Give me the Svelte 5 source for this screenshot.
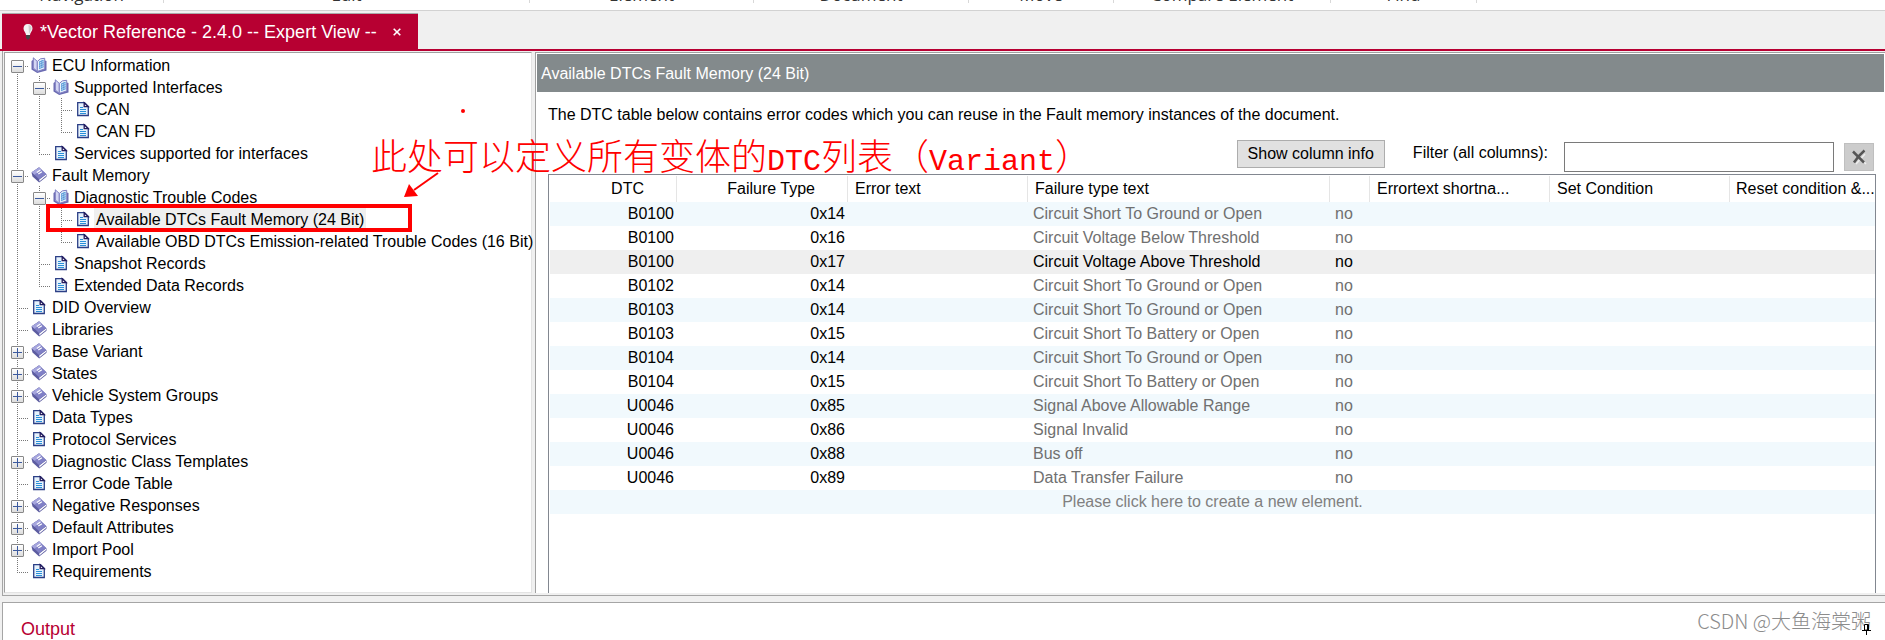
<script>
  let filter = $state('');
  let selected = $state('Available DTCs Fault Memory (24 Bit)');

  const ribbon = [
    { name: 'Navigation', width: 164 },
    { name: 'Edit', width: 366 },
    { name: 'Element', width: 224 },
    { name: 'Document', width: 215 },
    { name: 'Move', width: 145 },
    { name: 'Compare Element', width: 217 },
    { name: 'Find', width: 146 },
  ];

  let tree = $state([
    { name: 'ECU Information', icon: 'open', open: true, children: [
      { name: 'Supported Interfaces', icon: 'open', open: true, children: [
        { name: 'CAN', icon: 'doc' },
        { name: 'CAN FD', icon: 'doc' },
      ] },
      { name: 'Services supported for interfaces', icon: 'doc' },
    ] },
    { name: 'Fault Memory', icon: 'book', open: true, children: [
      { name: 'Diagnostic Trouble Codes', icon: 'open', open: true, children: [
        { name: 'Available DTCs Fault Memory (24 Bit)', icon: 'doc' },
        { name: 'Available OBD DTCs Emission-related Trouble Codes (16 Bit)', icon: 'doc' },
      ] },
      { name: 'Snapshot Records', icon: 'doc' },
      { name: 'Extended Data Records', icon: 'doc' },
    ] },
    { name: 'DID Overview', icon: 'doc' },
    { name: 'Libraries', icon: 'book' },
    { name: 'Base Variant', icon: 'book', children: [] },
    { name: 'States', icon: 'book', children: [] },
    { name: 'Vehicle System Groups', icon: 'book', children: [] },
    { name: 'Data Types', icon: 'doc' },
    { name: 'Protocol Services', icon: 'doc' },
    { name: 'Diagnostic Class Templates', icon: 'book', children: [] },
    { name: 'Error Code Table', icon: 'doc' },
    { name: 'Negative Responses', icon: 'book', children: [] },
    { name: 'Default Attributes', icon: 'book', children: [] },
    { name: 'Import Pool', icon: 'book', children: [] },
    { name: 'Requirements', icon: 'doc' },
  ]);

  const codes = [
    ['B0100', '0x14', 'Circuit Short To Ground or Open'],
    ['B0100', '0x16', 'Circuit Voltage Below Threshold'],
    ['B0100', '0x17', 'Circuit Voltage Above Threshold'],
    ['B0102', '0x14', 'Circuit Short To Ground or Open'],
    ['B0103', '0x14', 'Circuit Short To Ground or Open'],
    ['B0103', '0x15', 'Circuit Short To Battery or Open'],
    ['B0104', '0x14', 'Circuit Short To Ground or Open'],
    ['B0104', '0x15', 'Circuit Short To Battery or Open'],
    ['U0046', '0x85', 'Signal Above Allowable Range'],
    ['U0046', '0x86', 'Signal Invalid'],
    ['U0046', '0x88', 'Bus off'],
    ['U0046', '0x89', 'Data Transfer Failure'],
  ];
  let current = $state.raw(codes[2]);

  let rows = $derived(
    codes.filter((c) => c.join(' ').toLowerCase().includes(filter.toLowerCase()))
  );
</script>

{#snippet icon(kind)}
  {#if kind === 'doc'}
    <svg width="16" height="16" viewBox="0 0 16 16">
      <path d="M2.7 1.7h6.800l3.800 3.800v9H2.700z" fill="#e6f2fc" stroke="#2b3f86" stroke-width="1.3" />
      <path d="M9.2 1.700v4h4.100z" fill="#fff" stroke="#241c5e" stroke-width="1.3" />
      <path d="M5 6.500h3M5 8.500h6M5 10.500h6M5 12.500h6" stroke="#2a8fd8" />
    </svg>
  {:else if kind === 'book'}
    <svg width="16" height="16" viewBox="0 0 16 16">
      <path d="M.5 5.500L8 .3l7.500 7.200v2.200L8.200 15.600 1.500 9.500z" fill="#5c5ca0" />
      <path d="M8.300 12.400L15 7.400v1.600l-6.700 5.400z" fill="#fff" />
      <path d="M.8 5.300L8.200.4l7 6.700-7 5.200z" fill="#8080c6" />
      <path d="M.8 5.300L8.200.4l2.400 2.300-7.300 5z" fill="#a6a6dd" />
      <path d="M5.800 5.400l3.600-2.300M7.300 7l3.600-2.300" stroke="#fff" stroke-width="1.2" />
    </svg>
  {:else}
    <svg width="16" height="16" viewBox="0 0 16 16">
      <path d="M.5 4L2.500 2.500v9L6 14l8-2.500V3.500l1.500.5v9.500L6.200 16 .5 12.500z" fill="#6b6bb2" />
      <path d="M2.300.8L6.300 4.400v10l-4-3.400z" fill="#d4d6f3" stroke="#7c7cc0" />
      <path d="M6.300 4.400Q9 .8 13.700 1.300v10.600l-7.400 2.500z" fill="#e8f3fd" stroke="#7c7cc0" />
      <path d="M8 5.200l4.500-2M8 7.400l4.500-2M8 9.600l4.500-2M8 11.800l4.500-2M8.700 4.500v7M10.300 3.500v7.500M12 3v7.500" stroke="#4a90d4" stroke-width=".8" />
    </svg>
  {/if}
{/snippet}

{#snippet branch(nodes, guides)}
  {#each nodes as node, i}
    {@const last = i === nodes.length - 1}
    {@const first = i === 0 && guides.length === 0}
    <li>
      <div class="node">
        {#each guides as line}
          <span class="cell">
            {#if line}
              <svg class="lines" width="22" height="22"><path d="M11.5 0V22" /></svg>
            {/if}
          </span>
        {/each}
        <span class="cell">
          <svg class="lines" width="22" height="22">
            <path d="M11.5 {first ? 12 : 0}V{last ? 12 : 22}M11 12.5H22" />
          </svg>
          {#if node.children}
            <button
              class="expander"
              aria-label="Toggle {node.name}"
              onclick={() => (node.open = !node.open)}
            >
              <svg width="11" height="11" viewBox="0 0 11 11">
                <path d={node.open ? 'M1 5.5h9' : 'M1 5.5h9M5.5 1v9'} stroke="#3c5a9e" />
              </svg>
            </button>
          {/if}
        </span>
        <span class="cell">{@render icon(node.icon)}</span>
        <button
          class="label"
          class:selected={selected === node.name}
          onclick={() => (selected = node.name)}>{node.name}</button>
      </div>
      {#if node.open && node.children.length}
        <ul>{@render branch(node.children, [...guides, !last])}</ul>
      {/if}
    </li>
  {/each}
{/snippet}

<div class="app">
  <div class="ribbon">
    {#each ribbon as group}
      <div class="group" style="width: {group.width}px"><span>{group.name}</span></div>
    {/each}
  </div>

  <div class="tabs">
    <div class="tab">
      <svg width="10" height="16" viewBox="0 0 10 16">
        <path d="M5 0C2 0 .5 2 .5 4.500S2.800 8.500 3 11h4c.2-2.500 2.500-4 2.500-6.500S8 0 5 0z" fill="#f4f4f4" />
        <path d="M5.500 1C8 1.500 8.800 3 8.500 5L6 10z" fill="#cfcfcf" />
        <path d="M3 11h4v3L5 16 3 14z" fill="#444" />
      </svg>
      <span>*Vector Reference - 2.4.0 -- Expert View --</span>
      <button class="close" aria-label="Close tab">
        <svg width="8" height="8" viewBox="0 0 8 8">
          <path d="M.7.7l6.600 6.600M7.300.7L.7 7.300" stroke="#fff" stroke-width="1.600" />
        </svg>
      </button>
    </div>
  </div>

  <div class="workspace">
    <nav class="tree">
      <ul>{@render branch(tree, [])}</ul>
      <div class="mark"></div>
    </nav>

    <main class="editor">
      <h1>Available DTCs Fault Memory (24 Bit)</h1>
      <p class="hint">The DTC table below contains error codes which you can reuse in the Fault memory instances of the document.</p>

      <div class="tools">
        <button class="info">Show column info</button>
        <label for="filter">Filter (all columns):</label>
        <input id="filter" type="text" bind:value={filter} />
        <button class="clear" aria-label="Clear filter" onclick={() => (filter = '')}>
          <svg width="16" height="16" viewBox="0 0 16 16">
            <path d="M4 4l11 11M14 5l-9 10" stroke="#eee" stroke-width="1.500" />
            <path d="M2 2.500l11 11" stroke="#555" stroke-width="2.500" />
            <path d="M13.500 1.500Q8 6 3 13.500" fill="none" stroke="#555" stroke-width="2.500" />
          </svg>
        </button>
      </div>

      <div class="grid">
        <table>
          <colgroup>
            <col class="c1" /><col class="c2" /><col class="c3" /><col class="c4" />
            <col class="c5" /><col class="c6" /><col class="c6" /><col />
          </colgroup>
          <thead>
            <tr>
              <th class="num">DTC</th>
              <th class="num">Failure Type</th>
              <th>Error text</th>
              <th>Failure type text</th>
              <th></th>
              <th>Errortext shortna...</th>
              <th>Set Condition</th>
              <th>Reset condition &amp;...</th>
            </tr>
          </thead>
          <tbody>
            {#each rows as row}
              <tr class:current={row === current} onclick={() => (current = row)}>
                <td class="num">{row[0]}</td>
                <td class="num">{row[1]}</td>
                <td></td>
                <td class="text">{row[2]}</td>
                <td class="text">no</td>
                <td></td>
                <td></td>
                <td></td>
              </tr>
            {/each}
            <tr><td class="create" colspan="8">Please click here to create a new element.</td></tr>
          </tbody>
        </table>
      </div>
    </main>
  </div>

  <section class="output">
    <h2>Output</h2>
    <div class="watermark">CSDN @大鱼海棠粥</div>
    <svg class="pin" width="9" height="11" viewBox="0 0 9 11">
      <path d="M2.500 6V.5h4V6M5.500 0v6M0 6.500h9M4.500 6v5" fill="none" stroke="#000" />
    </svg>
  </section>

  <!-- red pen notes on top of the window -->
  <div class="note">此处可以定义所有变体的<span>DTC</span>列表（<span>Variant</span>）</div>
  <svg class="arrow" width="36" height="28" viewBox="0 0 36 28">
    <path d="M34 1L10 18" stroke="#f00" stroke-width="2" />
    <path d="M0 25L5 12l9 12z" fill="#f00" />
  </svg>
  <i class="dot"></i>
</div>

<style>
  :global(body) {
    margin: 0;
    overflow: hidden;
    background: #f0f0f0;
  }

  .app {
    position: relative;
    font: 16px/22px "Liberation Sans", Arial, sans-serif;
    color: #000;
  }

  button, input {
    font: inherit;
    color: inherit;
    box-sizing: border-box;
  }

  svg {
    display: block;
  }

  /* ribbon */
  .ribbon {
    display: flex;
    height: 10px;
    overflow: hidden;
    background: #fff;
    border-bottom: 1px solid #d2d2d2;
  }

  .group {
    display: flex;
    align-items: flex-end;
    justify-content: center;
    box-sizing: border-box;
    height: 3px;
    border-right: 1px solid #d8d8d8;
    color: #333;
    font-family: "Open Sans", sans-serif;
    font-size: 17px;
    flex-shrink: 0;
  }

  .group span {
    line-height: 16px;
  }

  /* tabs */
  .tabs {
    display: flex;
    padding: 2px 0 0 2px;
    border-bottom: 2px solid #b70032;
  }

  .tab {
    display: flex;
    align-items: center;
    box-sizing: border-box;
    height: 36px;
    padding: 0 17px 0 21px;
    border-top: 1px solid #aaa;
    background: #b70032;
    color: #fff;
    font-size: 18px;
  }

  .tab span {
    margin: 0 16px 0 7px;
  }

  .close {
    padding: 0;
    border: 0;
    background: none;
  }

  /* tree */
  .workspace {
    display: flex;
    margin-left: 2px;
    padding: 1px 0 2px 1px;
    border: solid #a5a5a5;
    border-width: 0 0 1px 1px;
  }

  .tree {
    position: relative;
    box-sizing: border-box;
    flex: 0 0 528px;
    min-width: 0;
    padding: 1px 0 10px 1px;
    border: 1px solid #a0a0a0;
    border-right-color: #e3e3e3;
    border-bottom-color: #e3e3e3;
    background: #fff;
  }

  ul {
    margin: 0;
    padding: 0;
    list-style: none;
  }

  .node {
    display: flex;
    height: 22px;
  }

  .cell {
    display: grid;
    flex: 0 0 22px;
    height: 22px;
    place-items: center;
  }

  .cell > :global(*) {
    grid-area: 1 / 1;
  }

  .lines {
    fill: none;
    stroke: #777;
    stroke-dasharray: 1 1;
    shape-rendering: crispEdges;
  }

  .expander {
    width: 13px;
    height: 13px;
    margin: 3px 0 0 1px;
    padding: 0;
    border: 1px solid #888;
    border-radius: 1px;
    background: linear-gradient(#fff, #ddd);
  }

  .label {
    padding: 2px 2px 0;
    border: 0;
    background: none;
    line-height: 20px;
    white-space: nowrap;
  }

  .label.selected {
    background: #efefef;
  }

  .mark {
    position: absolute;
    top: 151px;
    left: 41px;
    width: 358px;
    height: 20px;
    border: 4px solid #f00;
    pointer-events: none;
  }

  /* editor */
  .editor {
    display: flex;
    flex: 1;
    flex-direction: column;
    min-width: 0;
    margin-left: 3px;
    padding: 1px 1px 0 1px;
    border: solid #a0a0a0;
    border-width: 1px 0 0 1px;
    background: #fff;
  }

  h1 {
    margin: 0;
    padding: 9px 4px 7px;
    background: #838a8c;
    color: #fff;
    font-size: 16px;
    font-weight: normal;
  }

  .hint {
    margin: 12px 11px;
  }

  .tools {
    display: flex;
    align-items: flex-start;
    justify-content: flex-end;
    height: 36px;
    padding-right: 10px;
  }

  .info {
    height: 28px;
    margin-top: 2px;
    padding: 0 10px;
    border: 1px solid #adadad;
    background: #e1e1e1;
    line-height: 26px;
  }

  .tools label {
    margin: 4px 16px 0 28px;
  }

  .tools input {
    width: 270px;
    height: 30px;
    margin: 4px 10px 0 0;
    border: 1px solid #7a7a7a;
    background: #fff;
  }

  .clear {
    display: grid;
    place-items: center;
    width: 30px;
    height: 28px;
    margin-top: 5px;
    padding: 0;
    border: 1px solid #bfbfbf;
    background: #ccc;
  }

  .grid {
    flex: 1;
    margin: 0 8px 0 11px;
    padding: 1px 0 0 1px;
    border: 1px solid #828790;
    border-bottom: 0;
  }

  table {
    width: 100%;
    border-collapse: collapse;
    table-layout: fixed;
  }

  .c1 { width: 127px; }
  .c2 { width: 171px; }
  .c3 { width: 180px; }
  .c4 { width: 302px; }
  .c5 { width: 40px; }
  .c6 { width: 180px; }

  th, td {
    height: 24px;
    padding: 0;
    line-height: 24px;
    text-align: left;
    white-space: nowrap;
  }

  th {
    height: 26px;
    padding-left: 7px;
    box-shadow: inset -1px 0 #e5e5e5;
    font-weight: normal;
    line-height: 26px;
  }

  th:last-child {
    padding-left: 6px;
    box-shadow: none;
  }

  .num {
    padding-right: 3px;
    text-align: right;
  }

  th.num {
    padding-right: 33px;
  }

  tbody tr:nth-child(odd) {
    background: #f1f9fd;
  }

  tbody tr.current {
    background: #efefef;
  }

  .text {
    padding-left: 5px;
    color: #707070;
  }

  .current .text {
    color: #000;
  }

  .create {
    color: #808080;
    text-align: center;
  }

  /* output */
  .output {
    position: relative;
    margin: 6px 0 0 2px;
    padding: 15px 18px;
    border: solid #a5a5a5;
    border-width: 1px 0 0 1px;
    background: #fff;
  }

  h2 {
    margin: 0;
    color: #b70032;
    font-size: 18px;
    font-weight: normal;
  }

  .watermark {
    position: absolute;
    top: 7px;
    right: 14px;
    color: #8c8c8c;
    font: 300 20px/22px "Noto Sans CJK SC", sans-serif;
  }

  .pin {
    position: absolute;
    top: 21px;
    right: 14px;
  }

  .note {
    position: absolute;
    top: 134px;
    left: 371px;
    color: #f00;
    font: 300 36px/40px "Noto Sans CJK SC", sans-serif;
    white-space: nowrap;
    pointer-events: none;
  }

  .note span {
    font-family: "Liberation Mono", monospace;
    font-size: 30px;
    font-weight: 400;
  }

  .arrow {
    position: absolute;
    top: 172px;
    left: 404px;
  }

  .dot {
    position: absolute;
    top: 109px;
    left: 461px;
    width: 4px;
    height: 4px;
    border-radius: 50%;
    background: #f00;
  }
</style>
